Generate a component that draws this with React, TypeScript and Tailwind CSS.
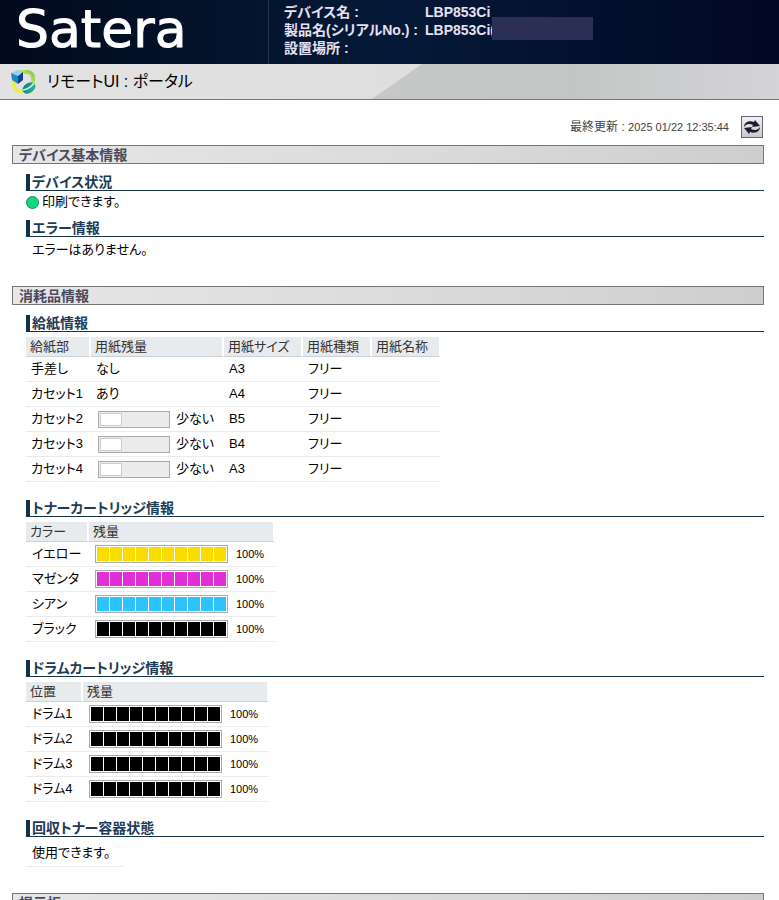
import React from 'react';

type Level = { name: string; fill: string };

const paperRows = [
  { source: '手差し', amount: 'なし', low: false, size: 'A3', type: 'フリー' },
  { source: 'カセット1', amount: 'あり', low: false, size: 'A4', type: 'フリー' },
  { source: 'カセット2', amount: '少ない', low: true, size: 'B5', type: 'フリー' },
  { source: 'カセット3', amount: '少ない', low: true, size: 'B4', type: 'フリー' },
  { source: 'カセット4', amount: '少ない', low: true, size: 'A3', type: 'フリー' },
];

const toners: Level[] = [
  { name: 'イエロー', fill: 'bg-[#fbdc00]' },
  { name: 'マゼンタ', fill: 'bg-[#e22ed6]' },
  { name: 'シアン', fill: 'bg-[#2fc3fb]' },
  { name: 'ブラック', fill: 'bg-black' },
];

const drums: Level[] = [
  { name: 'ドラム1', fill: 'bg-black' },
  { name: 'ドラム2', fill: 'bg-black' },
  { name: 'ドラム3', fill: 'bg-black' },
  { name: 'ドラム4', fill: 'bg-black' },
];

function PortalIcon() {
  return (
    <svg viewBox="0 0 28 28" className="size-7 shrink-0" aria-hidden="true">
      <defs>
        <linearGradient id="ring" x1="0" y1="1" x2="1" y2="0">
          <stop offset="0" stopColor="#e9ec3c" />
          <stop offset="0.5" stopColor="#f2f07a" />
          <stop offset="1" stopColor="#7ccb3a" />
        </linearGradient>
        <linearGradient id="globe" x1="0" y1="0" x2="1" y2="1">
          <stop offset="0" stopColor="#0f6f8c" />
          <stop offset="1" stopColor="#35c08e" />
        </linearGradient>
      </defs>
      <rect x="5" y="4" width="19" height="19" rx="6" fill="none" stroke="url(#ring)" strokeWidth="4" />
      <path d="M2 5l6-3 6 2-5 4z" fill="#8fd4f4" />
      <path d="M2 5l7 3v8l-6-4z" fill="#1f86c8" />
      <path d="M14 4L9 8v8l5-4z" fill="#0a4488" />
      <ellipse cx="20" cy="20" rx="7" ry="5" transform="rotate(-35 20 20)" fill="url(#globe)" />
      <path d="M14 22q7-1 11-7" fill="none" stroke="#c9f3ec" strokeWidth="1.5" />
    </svg>
  );
}

function RefreshIcon() {
  return (
    <svg viewBox="0 0 20 20" className="size-5 shrink-0" aria-hidden="true">
      <path d="M2 10C2 6 6 3 12 5L13 3L18 9L10 10L11 8C7 6 4 7 2 10z" fill="#1b212c" />
      <path d="M18 10C18 14 14 17 8 15L7 17L2 11L10 10L9 12C13 14 16 13 18 10z" fill="#1b212c" />
    </svg>
  );
}

function SectionTitle({ children }: { children: React.ReactNode }) {
  return (
    <h2 className="flex h-[19px] items-center border border-[#777] bg-linear-to-r from-[#e6e6e6] via-[#dcdcdc] to-[#cecece] pl-1.5 text-[14px] font-bold text-[#4a4a5c]">
      {children}
    </h2>
  );
}

function SubTitle({ children }: { children: React.ReactNode }) {
  return (
    <h3 className="flex h-[17px] items-center border-b border-l-4 border-b-[#17364a] border-l-[#0f3149] pl-0.5 text-[14px] font-bold text-[#1d3c55]">
      {children}
    </h3>
  );
}

function Th({ width, children }: { width: string; children: React.ReactNode }) {
  return (
    <th className={`${width} h-5 border-r-2 border-b border-r-white border-b-[#ccd2d6] bg-[#e8ebee] px-1 text-left font-normal text-[#333]`}>
      {children}
    </th>
  );
}

function LevelTable({ label, labelWidth, rows }: { label: string; labelWidth: string; rows: Level[] }) {
  return (
    <table className="mt-[5px] border-separate border-spacing-0">
      <thead>
        <tr>
          <Th width={labelWidth}>{label}</Th>
          <Th width="w-[186px]">残量</Th>
        </tr>
      </thead>
      <tbody>
        {rows.map((row) => (
          <tr key={row.name}>
            <td className="h-[25px] border-b border-[#ebebeb] pl-1.5">{row.name}</td>
            <td className="h-[25px] border-b border-[#ebebeb] pl-1.5">
              <div className="flex items-center gap-2">
                <div className="flex gap-px border border-[#aaa] bg-white p-px">
                  {Array.from({ length: 10 }, (_, i) => (
                    <span key={i} className={`h-3.5 w-3 ${row.fill}`} />
                  ))}
                </div>
                <span className="text-[11px]">100%</span>
              </div>
            </td>
          </tr>
        ))}
      </tbody>
    </table>
  );
}

export default function App() {
  return (
    <div className="bg-white font-['Liberation_Sans','Noto_Sans_CJK_JP',sans-serif] text-[13px] leading-[18px] text-black [font-feature-settings:'palt']">
      {/* Brand header */}
      <header className="flex h-16 bg-linear-to-r from-[#020a1c] via-[#051a38] to-[#020824] text-[#e6e0f2]">
        <div className="flex w-[269px] shrink-0 items-center border-r border-[#26334f] pb-1.5 pl-4 font-['DejaVu_Sans',sans-serif] text-[52px] leading-none text-white [-webkit-text-stroke:1px_white]">
          Satera
        </div>
        <dl className="grid grid-cols-[141px_auto] content-start pt-[3px] pl-[15px] text-[14px] font-bold">
          <dt>デバイス名 :</dt>
          <dd>LBP853Ci</dd>
          <dt>製品名(シリアルNo.) :</dt>
          <dd className="relative">
            LBP853Ci(
            <span className="absolute -top-1 left-[67px] h-[23px] w-[101px] bg-[#2b2e55]" />
          </dd>
          <dt>設置場所 :</dt>
          <dd />
        </dl>
      </header>

      {/* Page title */}
      <div className="relative flex h-9 items-center gap-2.5 border-b border-[#777] bg-linear-to-r from-[#e2e2e2] to-[#dcdcdc] pl-[9px]">
        <div className="absolute inset-y-0 right-0 left-[372px] bg-linear-to-r from-[#c6c8c8] via-[#c4c6c6] to-[#d4d4d6] [clip-path:polygon(50px_0,100%_0,100%_100%,0_100%)]" />
        <PortalIcon />
        <h1 className="text-[16px]">リモートUI : ポータル</h1>
      </div>

      <main className="pr-[15px] pb-8 pl-3">
        <div className="flex items-center justify-end gap-3 pt-4 pr-px pb-[7px] text-[12px] text-[#444]">
          <p>
            最終更新 : <time className="text-[11px]">2025 01/22 12:35:44</time>
          </p>
          <button type="button" aria-label="更新" className="flex size-[22px] items-center justify-center border border-[#667] bg-linear-to-b from-[#f0f0f4] to-[#c8c8d0]">
            <RefreshIcon />
          </button>
        </div>

        {/* Device info */}
        <section>
          <SectionTitle>デバイス基本情報</SectionTitle>
          <div className="pt-2.5 pl-3.5">
            <SubTitle>デバイス状況</SubTitle>
            <p className="flex h-[29px] items-start gap-[3px] pt-0.5">
              <span className="mt-[3px] size-[13px] rounded-full border border-[#14895a] bg-[#10d880]" />
              印刷できます。
            </p>
            <SubTitle>エラー情報</SubTitle>
            <p className="h-[49px] pt-1 pl-1.5">エラーはありません。</p>
          </div>
        </section>

        {/* Consumables */}
        <section>
          <SectionTitle>消耗品情報</SectionTitle>
          <div className="pt-2.5 pb-[26px] pl-3.5">
            <SubTitle>給紙情報</SubTitle>
            <table className="mt-[5px] mb-[18px] border-separate border-spacing-0">
              <thead>
                <tr>
                  <Th width="w-[65px]">給紙部</Th>
                  <Th width="w-[133px]">用紙残量</Th>
                  <Th width="w-[79px]">用紙サイズ</Th>
                  <Th width="w-[69px]">用紙種類</Th>
                  <Th width="w-[69px]">用紙名称</Th>
                </tr>
              </thead>
              <tbody className="[&_td]:h-[25px] [&_td]:border-b [&_td]:border-[#ebebeb] [&_td]:pl-[5px]">
                {paperRows.map((row) => (
                  <tr key={row.source}>
                    <td>{row.source}</td>
                    <td>
                      {row.low ? (
                        <div className="flex items-center gap-1.5 pl-0.5">
                          <div className="h-[17px] w-[72px] border border-[#aaa] bg-[#ececec] p-px">
                            <div className="h-full w-[22px] border border-[#ccc] bg-white" />
                          </div>
                          {row.amount}
                        </div>
                      ) : (
                        row.amount
                      )}
                    </td>
                    <td>{row.size}</td>
                    <td>{row.type}</td>
                    <td />
                  </tr>
                ))}
              </tbody>
            </table>

            <SubTitle>トナーカートリッジ情報</SubTitle>
            <LevelTable label="カラー" labelWidth="w-[63px]" rows={toners} />

            <div className="pt-[18px]">
              <SubTitle>ドラムカートリッジ情報</SubTitle>
              <LevelTable label="位置" labelWidth="w-[57px]" rows={drums} />
            </div>

            <div className="pt-[18px]">
              <SubTitle>回収トナー容器状態</SubTitle>
              <p className="h-[30px] w-[98px] border-b border-[#ebebeb] pt-[7px] pl-1.5">使用できます。</p>
            </div>
          </div>
        </section>

        <section>
          <SectionTitle>掲示板</SectionTitle>
        </section>
      </main>
    </div>
  );
}
